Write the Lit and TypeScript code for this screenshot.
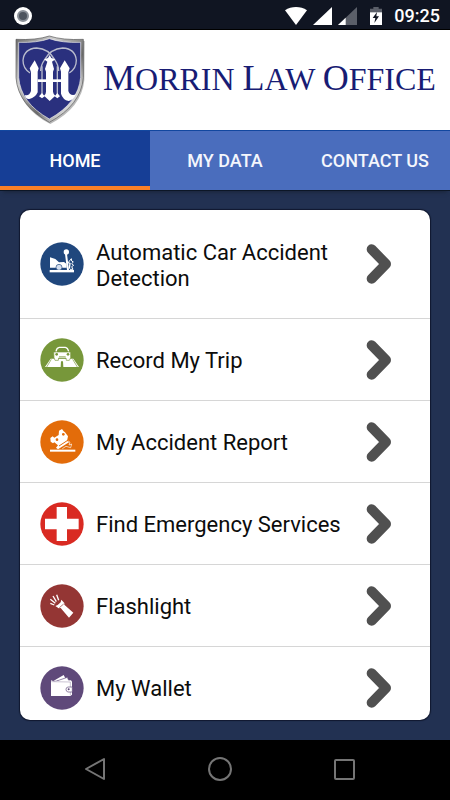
import { LitElement, html, css, svg } from "lit";
import { customElement, state } from "lit/decorators.js";

interface Item {
  label: string;
  color: string;
  icon: unknown;
  tall?: boolean;
}

const TABS = ["HOME", "MY DATA", "CONTACT US"];

const ITEMS: Item[] = [
  {
    label: "Automatic Car Accident Detection",
    color: "#20477d",
    tall: true,
    icon: svg`
      <path d="M30 46 L46 51 L57 61 L72 60 L80 66 L80 77 L30 77 Z" fill="#fff"/>
      <circle cx="57" cy="76" r="9" fill="#d5dfef" stroke="#20477d" stroke-width="2"/>
      <rect x="29" y="84" width="73" height="7" fill="#fff"/>
      <circle cx="79" cy="30" r="8" fill="#fff"/>
      <path d="M78 36 L84 84" stroke="#fff" stroke-width="6"/>
      <path d="M86 60 L94 50 L95 57 L100 60 L95 65 L101 70 L95 74 L99 82 L90 82" fill="none" stroke="#fff" stroke-width="3"/>
      <path d="M80 60 L90 64 L88 80" fill="none" stroke="#fff" stroke-width="4"/>`,
  },
  {
    label: "Record My Trip",
    color: "#77973a",
    icon: svg`
      <path d="M38 62 L32 62 L15 87 L62 87 L63 70 L69 70 L70 87 L117 87 L100 62 Z" fill="#fff"/>
      <path d="M34 64 L20 87 M98 64 L112 87" stroke="#77973a" stroke-width="2"/>
      <path d="M41 42 L92 42 L92 59 L88 67 L79 67 L78 60 L56 60 L55 67 L45 67 L42 59 Z" fill="#fff" stroke="#77973a" stroke-width="2"/>
      <path d="M48 40 Q50 29 58 28 L76 28 Q83 29 86 40" fill="none" stroke="#fff" stroke-width="4"/>
      <circle cx="50" cy="49" r="4" fill="#77973a"/><circle cx="84" cy="49" r="4" fill="#77973a"/>
      <path d="M57 56 L77 56" stroke="#77973a" stroke-width="2"/>`,
  },
  {
    label: "My Accident Report",
    color: "#e36c0a",
    icon: svg`
      <path d="M31 54 L38 49 L43 53 L56 45 L57 32 L66 27 L71 34 L75 37 L84 49 L81 63 L88 66 L54 88 L48 83 L54 76 L43 67 L39 70 L32 65 Z" fill="#fff"/>
      <circle cx="51" cy="59" r="4" fill="#e36c0a"/><circle cx="70" cy="43" r="4" fill="#e36c0a"/>
      <path d="M57 78 L83 61" stroke="#e36c0a" stroke-width="3"/>
      <path d="M85 63 L90 67 L87 75 L95 72 L92 83 L78 79 L67 86" fill="none" stroke="#fff" stroke-width="2"/>
      <rect x="30" y="89" width="76" height="6" fill="#fff"/>`,
  },
  {
    label: "Find Emergency Services",
    color: "#d92a22",
    icon: svg`<path d="M50 15 H81 V50 H116 V82 H81 V117 H50 V82 H15 V50 H50 Z" fill="#fff"/>`,
  },
  {
    label: "Flashlight",
    color: "#943634",
    icon: svg`
      <path d="M46 66 L53 63 L62 55 L64 47 L73 57 L73 62 L100 86 L87 101 L62 72 L56 73 Z" fill="#fff"/>
      <path d="M58 71 L71 60" stroke="#943634" stroke-width="2"/>
      <path d="M31 58 L43 63 M31 46 L46 58 M39 36 L49 53 M50 32 L56 49" stroke="#fff" stroke-width="4"/>`,
  },
  {
    label: "My Wallet",
    color: "#5f497a",
    icon: svg`
      <path d="M40 45 L71 27 L79 42 Z" fill="#fff"/>
      <path d="M50 45 L82 34 L87 45" fill="#fff" stroke="#5f497a" stroke-width="2"/>
      <path d="M33 43 L41 46 L93 43 L96 47 V86 L91 90 H33 Z" fill="#fff"/>
      <path d="M34 47 L91 48 V63 M91 78 V88" fill="none" stroke="#5f497a" stroke-width="1"/>
      <path d="M97 63 H84 Q78 64 78 70 Q78 77 84 78 H97 Z" fill="#fff" stroke="#5f497a" stroke-width="2"/>
      <circle cx="86" cy="70" r="3" fill="#5f497a"/>`,
  },
];

@customElement("app-root")
export class AppRoot extends LitElement {
  @state() private active = 0;

  static styles = css`
    :host {
      display: flex;
      flex-direction: column;
      height: 100vh;
      background: #223152;
      font-family: Roboto, "Liberation Sans", sans-serif;
    }
    * { box-sizing: border-box; }
    svg { display: block; flex: none; }
    button {
      font: inherit;
      border: 0;
      margin: 0;
      padding: 0;
      background: none;
      color: inherit;
      cursor: pointer;
    }
    .status {
      display: flex;
      align-items: center;
      height: 30px;
      flex: none;
      padding: 2px 10px 0 13px;
      background: #101522;
      border-bottom: 1px solid #000;
      color: #fff;
      font-size: 18px;
      font-weight: 500;
    }
    .icons {
      display: flex;
      align-items: center;
      gap: 6px;
      margin-left: auto;
      margin-right: 12px;
    }
    .battery { margin-left: 7px; }
    .brand {
      display: flex;
      align-items: center;
      flex: none;
      gap: 15px;
      height: 100px;
      padding: 0 12px 2px;
      background: #fff;
    }
    .name {
      margin: 0;
      padding-bottom: 2px;
      font: 400 32px/36px "Liberation Serif", serif;
      color: #181c74;
      white-space: nowrap;
    }
    .cap { font-size: 36px; }
    .tabs {
      display: grid;
      grid-template-columns: repeat(3, 1fr);
      flex: none;
      height: 61px;
      background: #4a6dbd;
      border-top: 1px solid #12479f;
      border-bottom: 1px solid #0c1626;
      box-shadow: 0 4px 4px -3px #1a2438;
    }
    .tab {
      color: #f4f6fc;
      font-size: 18px;
      font-weight: 500;
      border-bottom: 4px solid transparent;
      padding-top: 4px;
      white-space: nowrap;
    }
    .tab.on {
      background: #163e96;
      border-bottom-color: #f97f26;
      color: #fff;
    }
    .main {
      display: flex;
      flex: 1;
      min-height: 0;
      padding: 19px 20px 20px;
    }
    .list {
      flex: 1;
      margin: 0;
      padding: 0;
      list-style: none;
      overflow: hidden;
      background: #fff;
      border-radius: 10px;
      box-shadow: 0 0 1px 1px #10182f;
    }
    .item + .item { border-top: 1px solid #d6d6d6; }
    .row {
      display: flex;
      align-items: center;
      gap: 12px;
      width: 100%;
      height: 81px;
      padding: 0 38px 0 20px;
      text-align: left;
      font-size: 22px;
      line-height: 26px;
      color: #0c0c0c;
    }
    .row.tall { height: 108px; }
    .label { flex: 1; padding-top: 3px; }
    .nav {
      display: flex;
      justify-content: center;
      align-items: center;
      flex: none;
      gap: 84px;
      height: 60px;
      padding: 0 10px 2px 0;
      background: #000;
    }
    .nav button { padding: 8px; }
  `;

  render() {
    return html`
      <div class="status">
        <svg width="20" height="20" viewBox="0 0 20 20">
          <circle cx="10" cy="10" r="9" fill="#fff"/>
          <circle cx="10" cy="10" r="5" fill="#4d545e" stroke="#8a9098" stroke-width="2"/>
        </svg>
        <div class="icons">
          <svg width="22" height="18" viewBox="0 0 66 54">
            <path d="M0 10 Q15 0 33 0 Q51 0 66 10 L33 54 Z" fill="#fff"/>
          </svg>
          <svg width="19" height="18" viewBox="0 0 57 54"><path d="M0 54 L57 0 V54 Z" fill="#fff"/></svg>
          <svg width="19" height="18" viewBox="0 0 57 54">
            <path d="M0 54 L57 0 V54 Z" fill="#5b5f69"/>
            <path d="M0 54 L23 32 V54 Z" fill="#fff"/>
          </svg>
          <svg class="battery" width="12" height="18" viewBox="0 0 36 54">
            <path d="M0 5 H10 V0 H26 V5 H36 V18 H0 Z" fill="#5b5f69"/>
            <path d="M0 16 H36 V54 H0 Z" fill="#fff"/>
            <path d="M21 15 L8 33 H16 L13 48 L27 28 H19 Z" fill="#101522"/>
          </svg>
        </div>
        <span>09:25</span>
      </div>
      <header class="brand">
        <svg width="76" height="92" viewBox="38 98 228 276" role="img" aria-label="Law office crest">
          <defs>
            <linearGradient id="rim" x1="0" y1="0" x2="1" y2="1">
              <stop offset="0" stop-color="#686868"/><stop offset=".3" stop-color="#cfcfcf"/>
              <stop offset=".6" stop-color="#6c6c6c"/><stop offset=".8" stop-color="#d8d8d8"/>
              <stop offset="1" stop-color="#606060"/>
            </linearGradient>
          </defs>
          <path d="M53 122 Q115 124 153 111 Q192 124 256 122 L255 240 Q247 322 153 371 Q58 322 53 235 Z" fill="#b9b9b9"/>
          <path d="M50 117 Q110 120 150 107 Q190 120 252 117 L252 232 Q245 314 150 366 Q56 314 50 232 Z" fill="url(#rim)" stroke="#555" stroke-width="2"/>
          <path d="M58 126 Q112 128 150 115 Q188 128 244 126 L244 231 Q237 308 150 356 Q64 308 58 231 Z" fill="#2a307e" stroke="#eee" stroke-width="2"/>
          <g fill="none" stroke="#b9bccd" stroke-width="4">
            <path d="M92 218 Q71 205 71 180 Q74 145 112 143 Q148 145 166 178 Q178 195 178 212"/>
            <path d="M210 218 Q231 205 231 180 Q228 145 190 143 Q154 145 136 178 Q124 195 124 212"/>
            <path d="M128 198 V286 M174 198 V286"/>
          </g>
          <g fill="#fff">
            <path d="M106 180 L118 204 L115 214 V276 Q108 292 90 296 Q80 298 76 284 Q90 288 95 272 V216 L91 204 Z"/>
            <path d="M151 164 L156 173 L168 177 L158 184 L164 206 L161 214 V274 Q162 282 168 286 L151 302 L134 286 Q140 282 140 274 V214 L137 206 L144 184 L134 177 L146 173 Z"/>
            <path d="M196 180 L211 204 L207 216 V272 Q212 288 230 282 Q222 300 208 302 Q190 298 185 280 V214 L182 204 Z"/>
            <path d="M115 237 H186 V245 H115 Z"/>
            <path d="M119 288 L128 278 L136 288 L128 294 Z M166 288 L174 278 L182 288 L174 294 Z"/>
          </g>
        </svg>
        <h1 class="name"><span class="cap">M</span>ORRIN <span class="cap">L</span>AW <span class="cap">O</span>FFICE</h1>
      </header>
      <nav class="tabs">
        ${TABS.map(
          (t, i) => html`<button class="tab ${i === this.active ? "on" : ""}" @click=${() => (this.active = i)}>${t}</button>`
        )}
      </nav>
      <main class="main">
        <ul class="list">
          ${ITEMS.map(
            (it) => html`<li class="item">
              <button class="row ${it.tall ? "tall" : ""}">
                <svg width="44" height="44" viewBox="0 0 132 132">
                  <circle cx="66" cy="66" r="65" fill=${it.color}/>
                  ${it.icon}
                </svg>
                <span class="label">${it.label}</span>
                <svg width="26" height="40" viewBox="0 0 78 120">
                  <path d="M17 16 L60 60 L17 104" fill="none" stroke="#505050" stroke-width="30" stroke-linecap="round" stroke-linejoin="round"/>
                </svg>
              </button>
            </li>`
          )}
        </ul>
      </main>
      <footer class="nav">
        <button aria-label="Back">
          <svg width="24" height="26" viewBox="0 0 24 26"><path d="M21 3 V23 L3 13 Z" fill="none" stroke="#757575" stroke-width="2" stroke-linejoin="round"/></svg>
        </button>
        <button aria-label="Home">
          <svg width="26" height="26" viewBox="0 0 26 26"><circle cx="13" cy="13" r="11" fill="none" stroke="#757575" stroke-width="2"/></svg>
        </button>
        <button aria-label="Recent apps">
          <svg width="24" height="24" viewBox="0 0 24 24"><rect x="2" y="3" width="19" height="19" rx="1" fill="none" stroke="#757575" stroke-width="2"/></svg>
        </button>
      </footer>
    `;
  }
}
